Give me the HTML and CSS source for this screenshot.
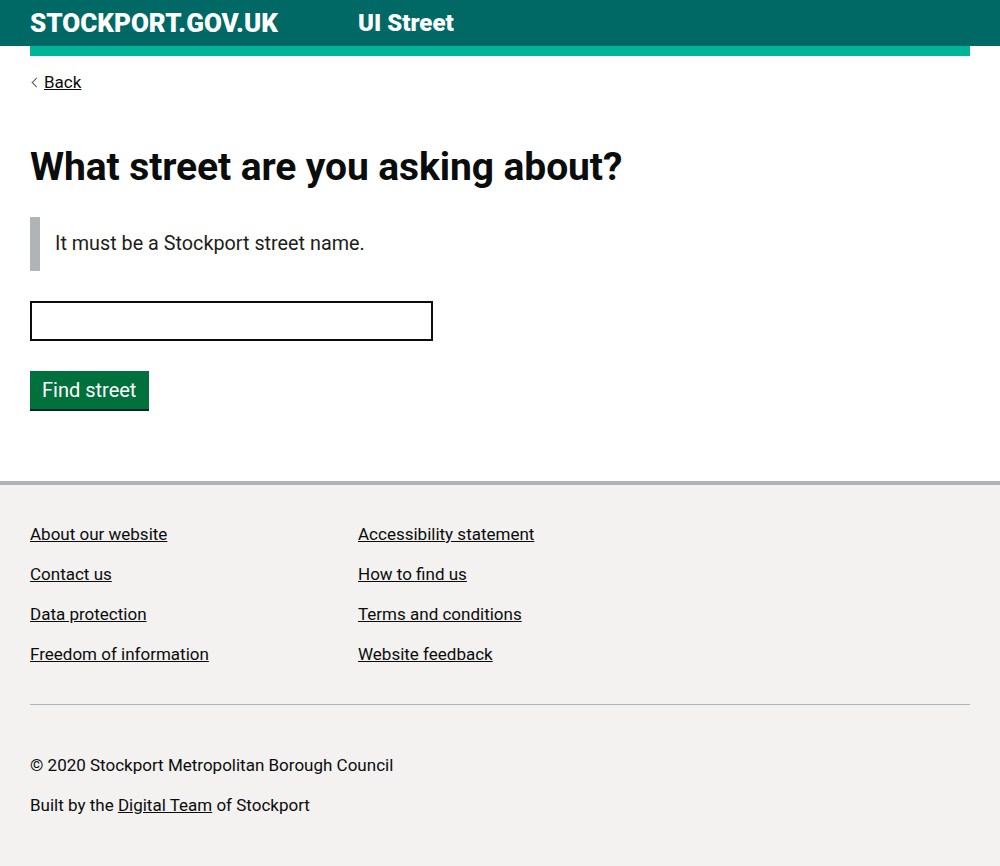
FILE: index.html
```html
<!DOCTYPE html>
<html lang="en">
<head>
<meta charset="utf-8">
<title>UI Street</title>
<link rel="stylesheet" href="styles.css">
</head>
<body>
<header class="site-header">
  <div class="header-inner">
    <span class="logo">STOCKPORT.GOV.UK</span>
    <span class="service">UI Street</span>
  </div>
</header>
<div class="container">
  <div class="accent-bar"></div>
  <a class="back-link" href="#">Back</a>
  <main class="main">
    <h1 class="heading">What street are you asking about?</h1>
    <div class="inset">It must be a Stockport street name.</div>
    <input class="text-input" type="text" aria-label="Street name">
    <div class="button-row"><button class="button" type="button">Find street</button></div>
  </main>
</div>
<footer class="site-footer">
  <div class="container">
    <div class="footer-links">
      <a href="#">About our website</a>
      <a href="#">Accessibility statement</a>
      <a href="#">Contact us</a>
      <a href="#">How to find us</a>
      <a href="#">Data protection</a>
      <a href="#">Terms and conditions</a>
      <a href="#">Freedom of information</a>
      <a href="#">Website feedback</a>
    </div>
    <hr class="footer-rule">
    <p class="footer-meta">© 2020 Stockport Metropolitan Borough Council</p>
    <p class="footer-meta">Built by the <a href="#">Digital Team</a> of Stockport</p>
  </div>
</footer>
</body>
</html>
```

FILE: styles.css
```css
* { box-sizing: border-box; }
html, body { margin: 0; padding: 0; }
body {
  font-family: Roboto, "Liberation Sans", Arial, sans-serif;
  color: #0b0c0c;
  background: #f3f2f1;
}
.site-header {
  background: #006966;
  height: 46px;
}
.header-inner {
  padding: 0 30px;
  display: flex;
  align-items: center;
  height: 46px;
  color: #fff;
  font-weight: 900;
  font-size: 26px;
}
.logo { width: 328px; }
.service { font-size: 24px; }
.container {
  padding: 0 30px;
  background: #fff;
}
.accent-bar {
  height: 10px;
  background: #00b496;
}
.back-link {
  display: inline-block;
  margin-top: 16px;
  padding-left: 14px;
  position: relative;
  font-size: 17px;
  line-height: 20px;
  color: #0b0c0c;
}
.back-link::before {
  content: "";
  position: absolute;
  left: 3px;
  top: 7px;
  width: 6px;
  height: 6px;
  border-left: 1px solid #505a5f;
  border-bottom: 1px solid #505a5f;
  transform: rotate(45deg);
}
.main {
  padding: 55px 0 70px;
}
.heading {
  margin: 0 0 30px;
  font-size: 39px;
  line-height: 40px;
  font-weight: 700;
  letter-spacing: -0.1px;
}
.inset {
  border-left: 10px solid #b1b4b6;
  padding: 15px 15px;
  font-size: 19.8px;
  line-height: 24px;
  color: #1d1d1b;
  margin-bottom: 30px;
}
.text-input {
  display: block;
  width: 403px;
  height: 40px;
  border: 2px solid #0b0c0c;
  margin: 0 0 30px;
  font-size: 18px;
  padding: 5px;
}
.button-row {
  display: flex;
  height: 40px;
}
.button {
  background: #00703c;
  color: #fff;
  border: 0;
  box-shadow: 0 2px 0 #002d18;
  font-family: inherit;
  font-size: 20px;
  line-height: 20px;
  padding: 9px 13px 9px 12px;
  height: 38px;
  cursor: pointer;
}
.site-footer {
  border-top: 4px solid #b1b4b6;
  background: #f3f2f1;
}
.site-footer .container {
  background: #f3f2f1;
  padding-top: 39px;
  padding-bottom: 40px;
}
.footer-links {
  display: grid;
  grid-template-columns: 328px 1fr;
  row-gap: 20px;
  font-size: 17px;
  line-height: 20px;
}
.footer-links a,
.footer-meta a {
  color: #0b0c0c;
}
.footer-rule {
  border: 0;
  border-top: 1px solid #b1b4b6;
  margin: 40px 0 50px;
}
.footer-meta {
  font-size: 17px;
  line-height: 20px;
  margin: 0 0 20px;
  color: #0b0c0c;
}
```
